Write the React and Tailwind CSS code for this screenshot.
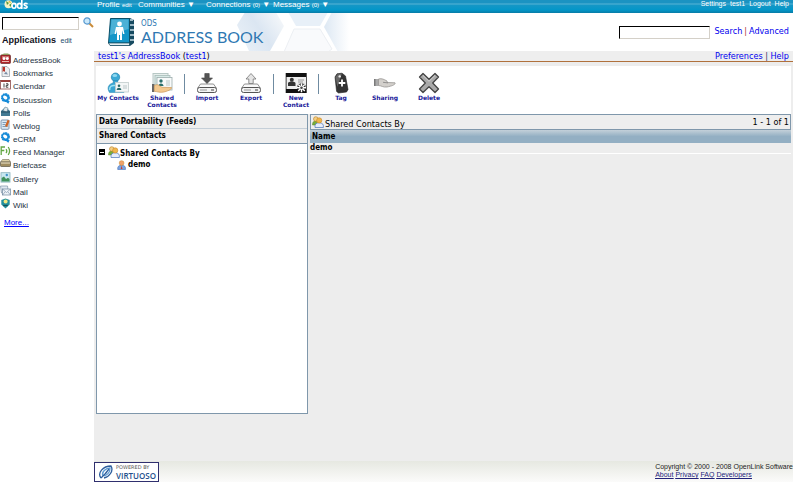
const verdana = "font-['DejaVu_Sans_Condensed','DejaVu_Sans',sans-serif]"

function PeopleIcon({ className = 'w-3 h-3', second = true, lead = '#f0b64c' }) {
  return (
    <svg viewBox="0 0 12 12" className={className} aria-hidden="true">
      {second && (
        <>
          <path d="M0.5 9 C0.5 5.5 2 5 4 5 C6 5 7 6 7 9Z" fill="#78ad3a" stroke="#55852a" strokeWidth=".5" />
          <circle cx="3.8" cy="3" r="2.3" fill="#f3cf86" stroke="#b88022" strokeWidth=".6" />
        </>
      )}
      <path d="M3 11.5 C2.5 8 4.5 6.8 7 6.8 C10.2 6.8 11.8 8 11.4 11.5Z" fill={second ? '#e4ecfb' : '#7ba4e0'} stroke="#4c74b8" strokeWidth=".7" />
      <circle cx="7.2" cy="4.4" r="2.6" fill={lead} stroke="#c98a2e" strokeWidth=".6" />
      {!second && <path d="M7.2 7 L6.3 11 L8.1 11Z" fill="#d13a28" />}
    </svg>
  )
}

/* Application list icons, all on an 11x11 grid */
const appIcons = {
  book: (
    <>
      <rect x=".5" y="2" width="10" height="8.5" rx="1" fill="#b0242a" stroke="#6b2a2a" strokeWidth=".7" />
      <path d="M1 2 L4 .5 H8 L10.5 2" fill="#8f9b62" />
      <path d="M2 4h7M2 8.5h7" stroke="#e9b9b0" />
      <circle cx="4" cy="5.6" r="1.5" fill="#fff" />
      <circle cx="7.3" cy="5.6" r="1.5" fill="#fff" />
    </>
  ),
  bookmark: (
    <>
      <path d="M2 .5 H7 L9.5 3 V10.5 H2Z" fill="#eceef0" stroke="#8d959c" strokeWidth=".7" />
      <path d="M2.6 1 H5 V6 L3.8 5 L2.6 6Z" fill="#b83428" />
      <path d="M4 8 L6 5.5 L8 8.5Z" fill="#7b8ea5" />
    </>
  ),
  calendar: (
    <>
      <rect x=".5" y="1.5" width="10" height="8.5" fill="#fff" stroke="#8b4a4a" strokeWidth=".8" />
      <rect x="1" y="1" width="9" height="2" fill="#97403c" />
      <path d="M4 4.5v4M6 4.8h2v1.6H6.2V8.2H8.3" fill="none" stroke="#333" strokeWidth=".9" />
    </>
  ),
  gear: (
    <>
      <circle cx="5.4" cy="4.6" r="3.7" fill="#168bd8" stroke="#168bd8" strokeWidth="1.6" strokeDasharray="1.9 .5" />
      <path d="M5 8 L9.7 8 L8.3 10.7Z" fill="#168bd8" />
      <ellipse cx="5.2" cy="4.5" rx="2.3" ry="1.6" fill="#fff" transform="rotate(30 5.2 4.5)" />
    </>
  ),
  polls: (
    <>
      <path d="M1 5 L5.5 1 L10 5 V10 H1Z" fill="#427a94" />
      <path d="M3 4.5 L5 1 L8 2 L7 6Z" fill="#dfe8ec" stroke="#5b7d8c" strokeWidth=".5" />
      <path d="M1 6h9" stroke="#234d62" />
    </>
  ),
  weblog: (
    <>
      <rect x="1" y="1" width="8" height="9.3" rx="1" fill="#dce9f2" stroke="#6382a1" strokeWidth=".8" />
      <path d="M2.5 3.5h4M2.5 5.5h3M2.5 7.5h5" stroke="#557ba2" strokeWidth=".7" />
      <path d="M5 7 L7.5 1 L9.6 1.4 L7.2 8Z" fill="#d16625" />
    </>
  ),
  feed: (
    <g fill="none" stroke="#63a744" strokeWidth="1.3">
      <path d="M1.2 10V2H5M1.2 5.5H4.3" />
      <path d="M6 4.2 Q7.6 6 6 8M8.2 2 Q11 6 8.2 10" />
    </g>
  ),
  briefcase: (
    <>
      <path d="M.5 4 L2.5 1.5 H9 L10.5 4Z" fill="#ddd0a4" stroke="#77705b" strokeWidth=".6" />
      <rect x=".5" y="4" width="10" height="4.5" rx=".7" fill="#a08e61" stroke="#5d5745" strokeWidth=".7" />
      <path d="M1 5h9" stroke="#efe7ce" />
    </>
  ),
  gallery: (
    <>
      <rect x="1" y=".7" width="9" height="9.4" fill="#c9e8f1" stroke="#88b2bb" strokeWidth=".8" />
      <path d="M1.6 9.5 V6 L4 4.5 L6 7 L8 5.8 L9.5 7 V9.5Z" fill="#3f915b" />
      <circle cx="6.8" cy="3" r="1.2" fill="#4194c9" />
    </>
  ),
  mail: (
    <>
      <path d="M.5 1 H7.5 L8.5 8 H1.5Z" fill="#dfe8f1" stroke="#7e93a8" strokeWidth=".7" />
      <rect x="2.5" y="4" width="8" height="6" fill="#eef3f8" stroke="#6e869d" strokeWidth=".7" />
      <path d="M2.5 4 L6.5 7.5 L10.5 4M2.5 10 L5 7M10.5 10 L8 7" fill="none" stroke="#6e869d" strokeWidth=".6" />
    </>
  ),
  wiki: (
    <>
      <path d="M5.5 .5 L9.7 2 V6.5 L5.5 10.5 L1.3 6.5 V2Z" fill="#23909e" />
      <circle cx="5.6" cy="3.6" r="2" fill="#f1e680" />
      <path d="M3.2 7.5h4.6" stroke="#14505b" strokeWidth="1.3" />
    </>
  ),
}

const apps = [
  ['AddressBook', 'book'],
  ['Bookmarks', 'bookmark'],
  ['Calendar', 'calendar'],
  ['Discussion', 'gear'],
  ['Polls', 'polls'],
  ['Weblog', 'weblog'],
  ['eCRM', 'gear'],
  ['Feed Manager', 'feed'],
  ['Briefcase', 'briefcase'],
  ['Gallery', 'gallery'],
  ['Mail', 'mail'],
  ['Wiki', 'wiki'],
]

function Drive({ up }) {
  return (
    <svg viewBox="0 0 22 22" className="w-[22px] h-[22px]" aria-hidden="true">
      <path d="M4.5 12 H17.5 L20.3 16 H1.7Z" fill="#fafafa" stroke="#777" strokeWidth=".8" />
      <rect x="1.5" y="15.5" width="19" height="5" rx="2" fill="#f3f3f3" stroke="#555" />
      <path d="M4 18h7" stroke="#999" />
      <path d="M15 18h3" stroke="#444" />
      {up ? (
        <path d="M11 1.5 L16 7 H13.2 V11.5 H8.8 V7 H6Z" fill="#e4e4e4" stroke="#777" strokeWidth=".8" />
      ) : (
        <path d="M8.8 1.5 H13.2 V6 H16.5 L11 11.5 L5.5 6 H8.8Z" fill="#555" stroke="#444" strokeWidth=".6" />
      )}
    </svg>
  )
}

function MyContactsIcon() {
  return (
    <svg viewBox="0 0 22 22" className="w-[22px] h-[22px]" aria-hidden="true">
      <circle cx="8.5" cy="5.2" r="4.2" fill="#3ba9d5" stroke="#2584af" strokeWidth=".7" />
      <ellipse cx="7.8" cy="3.6" rx="2.4" ry="1.5" fill="#8fd8f0" />
      <path d="M2.5 20.5 C-.5 16 1.5 12 6 11 L6.5 8.5 H10.5 L11 11.5 L17 20.5Z" fill="#3aa5d2" stroke="#2584af" strokeWidth=".5" />
      <path d="M2.8 18 C2 14.5 5 13 8 13.5" fill="none" stroke="#9ee2f4" strokeWidth="1.5" />
      <rect x="8.5" y="10.5" width="13" height="9.5" fill="#f3f6f6" stroke="#c1cccd" strokeWidth=".8" />
      <circle cx="12" cy="13.7" r="1.3" fill="#276a6a" />
      <path d="M9.7 18 C9.7 15 14.3 15 14.3 18Z" fill="#276a6a" />
      <path d="M16 14h4M16 16h4" stroke="#bbc6c8" />
    </svg>
  )
}

function SharedContactsIcon() {
  return (
    <svg viewBox="0 0 22 22" className="w-[22px] h-[22px]" aria-hidden="true">
      <rect x="2" y="1.5" width="15" height="11" fill="#e7efed" stroke="#b8c8c5" />
      <rect x="4" y="3.5" width="15" height="11" fill="#d8eae7" stroke="#a8bcb9" strokeWidth=".8" />
      <rect x="6" y="5.5" width="15" height="12.5" fill="#f8fafa" stroke="#9cadad" strokeWidth=".8" />
      <circle cx="10" cy="9" r="1.7" fill="#296f6b" />
      <path d="M7.5 14 C7.5 10.5 12.5 10.5 12.5 14Z" fill="#296f6b" />
      <path d="M15 9h4M15 11h4M15 13h4" stroke="#9fb3b1" strokeWidth=".7" />
      <rect x="1" y="12" width="2.3" height="8" fill="#666" />
      <path d="M3.3 13.5 C7 11.5 8 13.5 11 15.3 L20.5 15.5 C21 16.5 19 18.5 13 20 C9 21 6 19.5 3.3 19.3Z" fill="#f3c98f" stroke="#c48b46" strokeWidth=".6" />
    </svg>
  )
}

function NewContactIcon() {
  return (
    <svg viewBox="0 0 22 22" className="w-[22px] h-[22px]" aria-hidden="true">
      <rect x=".7" y="1" width="21" height="20" fill="#111" />
      <rect x="1.5" y="5" width="19.5" height="12" fill="#eee" />
      <circle cx="6.8" cy="7.8" r="2" fill="#333" />
      <path d="M3 14 V11 C4 9 9.5 9 10.5 11 V14Z" fill="#333" />
      <path d="M13 8h6M13 10h5" stroke="#999" />
      <path d="M16.5 11.3v9M12 15.8h9M13.2 12.5l6.6 6.6M19.8 12.5l-6.6 6.6" stroke="#222" strokeWidth="2.5" />
      <path d="M16.5 11.3v9M12 15.8h9M13.2 12.5l6.6 6.6M19.8 12.5l-6.6 6.6" stroke="#fff" strokeWidth="1.4" />
      <circle cx="16.5" cy="15.8" r="1.3" fill="#444" />
    </svg>
  )
}

function TagIcon() {
  return (
    <svg viewBox="0 0 22 22" className="w-[22px] h-[22px]" aria-hidden="true">
      <path d="M5 5 L7 1.8 L12 1.2 L15.5 4 L18 17.5 L16.5 20 L8.5 21 L6.6 19.5Z" fill="#333" stroke="#222" strokeWidth=".6" />
      <path d="M5.6 5.3 L7.4 2.3 L11.8 1.8 L7.3 15Z" fill="#888" opacity=".6" />
      <circle cx="9.7" cy="4.4" r="1.2" fill="#eee" />
      <path d="M12 7.5v7M8.7 11h6.6" stroke="#fff" strokeWidth="1.8" />
    </svg>
  )
}

function SharingIcon() {
  return (
    <svg viewBox="0 0 22 22" className="w-[22px] h-[22px]" aria-hidden="true">
      <path d="M1 7 V14" stroke="#222" strokeWidth="1.2" />
      <rect x="1.5" y="7" width="3" height="7" fill="#aaa" />
      <path d="M4.5 7 C8 6 10 7.5 13 9 L13.3 10.5 L21 10.8 C22 12.5 18 14 13 15 C9 15.5 7.5 13.7 4.5 13.5Z" fill="#d3d0cc" stroke="#8c8986" strokeWidth=".7" />
      <path d="M9 10.3 L14 10.9" stroke="#777" strokeWidth=".7" />
    </svg>
  )
}

function DeleteIcon() {
  return (
    <svg viewBox="0 0 22 22" className="w-[22px] h-[22px]" aria-hidden="true">
      <path
        d="M5 1.5 L11 7.3 L17 1.5 L20.5 5 L14.7 11 L20.5 17 L17 20.5 L11 14.7 L5 20.5 L1.5 17 L7.3 11 L1.5 5Z"
        fill="#a9a9a9"
        stroke="#444"
        strokeWidth="1.3"
        strokeLinejoin="round"
      />
      <path d="M5 3.5 L11 9.3 L17 3.5" fill="none" stroke="#d2d2d2" />
    </svg>
  )
}

const tools = [
  { label: 'My Contacts', icon: <MyContactsIcon /> },
  { label: 'Shared Contacts', icon: <SharedContactsIcon /> },
  null,
  { label: 'Import', icon: <Drive /> },
  { label: 'Export', icon: <Drive up /> },
  null,
  { label: 'New Contact', icon: <NewContactIcon /> },
  null,
  { label: 'Tag', icon: <TagIcon /> },
  { label: 'Sharing', icon: <SharingIcon /> },
  { label: 'Delete', icon: <DeleteIcon /> },
]

function TopBar() {
  return (
    <header className="h-[13px] flex justify-between text-[8px] leading-[9px] text-white bg-[linear-gradient(#1b93c2_0px,#1b93c2_3px,#56b4d6_4px,#1697c6_5px,#0296c8_10px,#087ba6_13px)]">
      <div className="flex">
        <a href="#home" aria-label="ODS home" className="w-[97px] pl-1">
          <svg viewBox="0 0 26 10" className="w-[26px] h-[10px]" aria-hidden="true">
            <circle cx="4.5" cy="4.3" r="4" fill="#f5f3c8" />
            <path d="M2 1 L5 3 L3 5Z M5 5 L8 3 L7 7Z" fill="#5a9b3c" />
            <path d="M4 2 L6 1 L7 3Z" fill="#e3b420" />
            <g fill="none" stroke="#fff" strokeWidth="1.6">
              <ellipse cx="10" cy="5.8" rx="2" ry="2.4" />
              <ellipse cx="15.5" cy="5.8" rx="2" ry="2.4" />
              <path d="M17.8 0v9M23.6 3.8 C20 2.5 19 5 21.5 5.7 C24.5 6.5 23 9 19.5 7.8" />
            </g>
          </svg>
        </a>
        <nav className="flex whitespace-nowrap">
          <a href="#profile" className="w-[41px]">Profile <span className="text-[6px]">edit</span></a>
          <a href="#communities" className="w-[68px]">Communities ▼</a>
          <a href="#connections" className="w-[67px]">Connections <span className="text-[6px]">(0)</span> ▼</a>
          <a href="#messages">Messages <span className="text-[6px]">(0)</span> ▼</a>
        </nav>
      </div>
      <nav className="flex gap-1 pr-1 text-[7px] leading-[8px]">
        <a href="#settings">Settings</a>
        <a href="#test1">test1</a>
        <a href="#logout">Logout</a>
        <a href="#help">Help</a>
      </nav>
    </header>
  )
}

function Sidebar() {
  return (
    <aside className="w-[94px] shrink-0 pt-1 text-[8px] text-[#26333f]">
      <form className="flex gap-1 pl-0.5">
        <input
          aria-label="Search applications"
          className="w-[77px] h-[13px] bg-white border border-t-black border-l-black border-r-[#d4d0c8] border-b-[#d4d0c8]"
        />
        <button type="button" aria-label="Search" className="self-start">
          <svg viewBox="0 0 11 11" className="w-[11px] h-[11px]" aria-hidden="true">
            <path d="M6 6 L10 10" stroke="#c98b38" strokeWidth="2" />
            <circle cx="4" cy="4" r="3.1" fill="#c9e8fb" stroke="#5798cf" strokeWidth="1.2" />
          </svg>
        </button>
      </form>
      <h2 className="pl-0.5 mt-1 text-[9px] leading-[12px] font-bold text-[#112]">
        Applications <a href="#edit" className="ml-0.5 text-[7px] font-normal text-[#234b6c]">edit</a>
      </h2>
      <ul className="mt-1.5 h-[158px] flex flex-col justify-between">
        {apps.map(([name, icon]) => (
          <li key={name}>
            <a href={`#${name}`} className="flex gap-0.5">
              <svg viewBox="0 0 11 11" className="w-[11px] h-[11px]" aria-hidden="true">{appIcons[icon]}</svg>
              <span className="pt-0.5 leading-[11px]">{name}</span>
            </a>
          </li>
        ))}
      </ul>
      <a href="#more" className="block mt-1.5 ml-1 leading-[12px] text-[#00f] underline">More...</a>
    </aside>
  )
}

function Banner() {
  return (
    <div className="relative h-[38px] flex items-center justify-between">
      <svg viewBox="0 0 150 38" className="absolute left-[130px] top-0 w-[150px] h-[38px]" aria-hidden="true">
        <defs>
          <linearGradient id="hexLeft" x1="0" y1=".8" x2="1" y2=".2">
            <stop offset="0" stopColor="#e9f0f7" />
            <stop offset=".5" stopColor="#dbe6f2" />
            <stop offset="1" stopColor="#f6f8fa" />
          </linearGradient>
          <linearGradient id="hexRight" x1="0" x2="1">
            <stop offset="0" stopColor="#dde8f3" />
            <stop offset=".6" stopColor="#fff" />
          </linearGradient>
        </defs>
        <path d="M13 12 L23 -4 H50 L60 13 L46 38 H25Z" fill="url(#hexLeft)" />
        <path d="M64 -1 L72 13 H96 L104 -1Z" fill="#e8f0f8" />
        <path d="M70 16 H96 L108 36 L104 39 H60Z" fill="#f9fafc" stroke="#eceff3" />
        <path d="M100 14 L108 -1 H140 L142 17 L130 39 H114Z" fill="url(#hexRight)" />
      </svg>
      <div className="relative flex items-center gap-1.5 pl-[13px]">
        <svg viewBox="0 0 28 30" className="w-[28px] h-[30px]" aria-hidden="true">
          <path d="M4 1 H23 L27 3 V26 L23 29 H3Z" fill="#164a60" />
          <path d="M22 3h4M22 8h5M22 13h5M22 18h5M22 23h5" stroke="#c6dce5" strokeWidth="1.3" />
          <path d="M3.5 1.5 H22.5 V26 H1.5Z" fill="#1496c8" stroke="#0c5068" />
          <path d="M4.5 2.5 H21.5 V12 L3 18Z" fill="#6fc3df" opacity=".6" />
          <path d="M1.5 26 H22.5 V28.5 H3Z" fill="#e4eff2" stroke="#164a60" strokeWidth=".7" />
          <circle cx="12.5" cy="7" r="2.4" fill="#fff" />
          <path d="M9 10 H16 L17.5 17 H16 L15 13 V23 H13 V18 H12 V23 H10 V13 L9 17 H7.5Z" fill="#fff" />
        </svg>
        <h1 className="text-[#2f78b2]">
          <span className="block text-[8px] leading-[9px]">ODS</span>
          <span className="block text-[16px] leading-[17px] whitespace-nowrap font-['Lato',sans-serif]">ADDRESS BOOK</span>
        </h1>
      </div>
      <form className="flex items-center pr-1 text-[9px] text-[#00e]">
        <input
          aria-label="Search contacts"
          className="w-[91px] h-[13px] mr-1 bg-white border border-t-black border-l-black border-r-[#d4d0c8] border-b-[#d4d0c8]"
        />
        <a href="#search">Search</a>
        <span className="px-0.5 text-[#a33]">|</span>
        <a href="#advanced">Advanced</a>
      </form>
    </div>
  )
}

function Toolbar() {
  return (
    <div className="h-[48px] pt-1.5 flex bg-white font-['DejaVu_Sans',sans-serif] text-[6px] leading-[7px] font-bold text-[#20209a]">
      {tools.map((tool, i) =>
        tool ? (
          <button key={tool.label} type="button" className="w-[44px] flex flex-col items-center text-center">
            {tool.icon}
            <span className={tool.label === 'My Contacts' ? 'whitespace-nowrap' : 'w-9'}>{tool.label}</span>
          </button>
        ) : (
          <span key={i} className="w-px h-5 mt-0.5 bg-[#6f8ba1]" />
        )
      )}
    </div>
  )
}

function ContactsTree() {
  return (
    <section className="w-[212px] h-[300px] bg-white border border-[#7f97ab] text-[8px] font-bold text-black">
      <h2 className="h-[14px] pl-0.5 leading-[13px] bg-[#eee] border-b border-[#c5cfd8]">Data Portability (Feeds)</h2>
      <h2 className="h-[15px] pl-0.5 leading-[14px] bg-[#eee] border-b border-[#7f97ab]">Shared Contacts</h2>
      <div className="pl-0.5 pt-px">
        <div className="flex items-center">
          <button type="button" aria-label="Collapse" className="w-[6px] h-[6px] mr-[3px] px-px bg-black flex items-center">
            <span className="w-full h-px bg-white" />
          </button>
          <PeopleIcon />
          <span className="pt-1 leading-[10px]">Shared Contacts By</span>
        </div>
        <a href="#demo" className="flex items-center pl-4">
          <PeopleIcon className="w-[11px] h-[11px]" second={false} lead="#efa06a" />
          <span className="pl-0.5 leading-[10px]">demo</span>
        </a>
      </div>
    </section>
  )
}

function ContactsTable() {
  return (
    <section className="flex-1 text-black">
      <div className="h-[16px] px-px flex justify-between border border-[#7f97ab] bg-[#eee] text-[9px] leading-[14px]">
        <span className="flex items-center">
          <PeopleIcon />
          <span className="pl-px pt-1">Shared Contacts By</span>
        </span>
        <span>1 - 1 of 1</span>
      </div>
      <table className="w-full text-left text-[8px]">
        <thead>
          <tr className="h-[13px] bg-[linear-gradient(#c3d0d9,#93afc3_50%,#93afc3)]">
            <th className="p-0 pl-0.5 leading-[13px]">Name</th>
          </tr>
        </thead>
        <tbody>
          <tr className="border-b border-white">
            <td className="p-0 leading-[10px] font-bold">demo</td>
          </tr>
        </tbody>
      </table>
    </section>
  )
}

function Footer() {
  return (
    <footer className="h-[21px] flex justify-between bg-[linear-gradient(#e6e8e1,#fbfbfa)] text-[7px] leading-[8px] text-[#222]">
      <a href="#virtuoso" className="w-[65px] h-[20px] mt-px flex items-center gap-0.5 pl-[3px] bg-white border border-[#2f2f6e]">
        <svg viewBox="0 0 16 16" className="w-4 h-4" aria-hidden="true">
          <g fill="none" stroke="#2e5e9c" strokeWidth="1.3">
            <path d="M3 14 C-1 9 5 2 13 2 C16 7 11 13 6 14" />
            <path d="M5 12 C3 8 8 4 12 4 C12 8 9 11 6 12" stroke="#5c9bd4" />
            <path d="M7 10 L11 5M3 14 L9 8" />
          </g>
        </svg>
        <span className="whitespace-nowrap">
          <span className="block text-[5px] leading-[7px] text-[#555] font-['DejaVu_Sans',sans-serif]">POWERED BY</span>
          <span className="block text-[8px] leading-[10px] font-['Open_Sans',sans-serif] font-semibold text-[#23508c]">VIRTUOSO</span>
        </span>
      </a>
      <div className="pt-0.5">
        <p>Copyright © 2000 - 2008 OpenLink Software</p>
        <p className="flex gap-0.5 text-[#22227a] underline">
          <a href="#about">About</a>
          <a href="#privacy">Privacy</a>
          <a href="#faq">FAQ</a>
          <a href="#developers">Developers</a>
        </p>
      </div>
    </footer>
  )
}

export default function App() {
  return (
    <div className="min-h-screen bg-white pr-[7px] font-['Liberation_Sans',Arial,sans-serif]">
      <TopBar />
      <div className="flex">
        <Sidebar />
        <main className="flex-1">
          <div className={verdana}>
            <Banner />
            <div className="h-[11px] px-1 flex justify-between bg-[#eee] border-b border-[#b0713c] text-[9px] leading-[10px] text-[#00e]">
              <span>
                <a href="#book">test1's AddressBook</a> <span className="text-black">(</span>
                <a href="#test1">test1</a>
                <span className="text-black">)</span>
              </span>
              <span>
                <a href="#prefs">Preferences</a> <span className="text-[#336]">|</span> <a href="#help">Help</a>
              </span>
            </div>
            <div className="h-[399px] bg-[#ededed] pt-1 pl-0.5 pr-0.5">
              <Toolbar />
              <div className="flex gap-0.5">
                <ContactsTree />
                <ContactsTable />
              </div>
            </div>
          </div>
          <Footer />
        </main>
      </div>
    </div>
  )
}
